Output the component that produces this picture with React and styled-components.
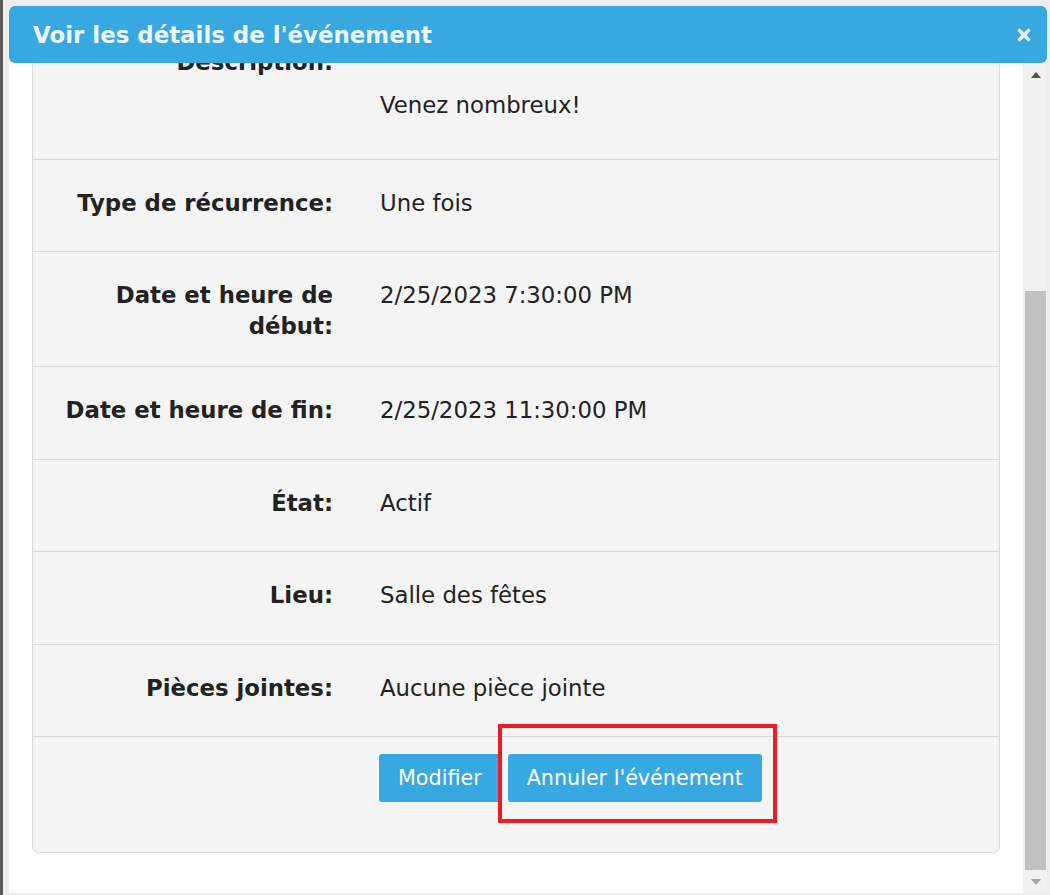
import React from "react";
import styled, { createGlobalStyle } from "styled-components";

const GlobalStyle = createGlobalStyle`
  html,
  body {
    margin: 0;
    height: 100%;
    overflow: hidden;
    background-color: #5a5a5a;
    font-family: "DejaVu Sans", Verdana, sans-serif;
  }
`;

const Backdrop = styled.div`
  height: 895px;
  padding-left: 3px;
  box-sizing: border-box;
`;

const Dialog = styled.div`
  display: flex;
  flex-direction: column;
  height: 100%;
  padding: 6px 3px 2px 6px;
  box-sizing: border-box;
  background-color: #eeeeee;
`;

const TitleBar = styled.div`
  flex-shrink: 0;
  display: flex;
  justify-content: space-between;
  align-items: center;
  height: 57px;
  padding: 1px 15px 0 24px;
  box-sizing: border-box;
  border-radius: 6px;
  background-color: #38a9e0;
`;

const Title = styled.h1`
  margin: 0;
  font-size: 22.9px;
  font-weight: bold;
  color: #eef7fc;
`;

const CloseButton = styled.button`
  display: flex;
  padding: 0;
  border: none;
  background: none;
  cursor: pointer;
`;

const Content = styled.div`
  flex: 1;
  min-height: 0;
  display: flex;
  background-color: #ffffff;
`;

const Viewport = styled.div`
  flex: 1;
  display: flex;
  flex-direction: column;
  justify-content: flex-end;
  overflow: hidden;
  padding: 0 23px 40px;
`;

const Panel = styled.div`
  flex-shrink: 0;
  border: 1px solid #dcdcdc;
  border-radius: 6px;
  background-color: #f4f4f4;
  color: #222222;
  font-size: 22.8px;
  line-height: 31px;
`;

const Row = styled.div`
  display: grid;
  grid-template-columns: 300px 1fr;
  column-gap: 47px;
  padding: 28px 0 24px;
  border-top: ${(p) => (p.$first ? "none" : "1px solid #d6d6d6")};
`;

const Label = styled.div`
  text-align: right;
  font-weight: bold;
`;

const Value = styled.div`
  padding-bottom: 8.5px;
`;

const Paragraph = styled.p`
  margin: 43px 0 5px;
`;

const Footer = styled(Row)`
  column-gap: 46px;
  padding: 17px 0 50px;
`;

const Actions = styled.div`
  grid-column: 2;
  display: flex;
  gap: 7px;
`;

const Button = styled.button`
  height: 48px;
  padding: 0 19px;
  border: none;
  border-radius: 3px;
  background-color: #38a9e0;
  color: #ffffff;
  font-family: "DejaVu Sans", Verdana, sans-serif;
  font-size: 20.7px;
  cursor: pointer;
`;

const Highlight = styled.div`
  position: relative;
  display: flex;
`;

const HighlightBox = styled.div`
  position: absolute;
  top: -30px;
  left: -10px;
  right: -15px;
  bottom: -21px;
  border: 4px solid #ec1c26;
  pointer-events: none;
`;

const Scrollbar = styled.div`
  flex-shrink: 0;
  display: flex;
  flex-direction: column;
  width: 24px;
  background-color: #f1f1f1;
`;

const ArrowButton = styled.div`
  flex-shrink: 0;
  display: flex;
  justify-content: center;
  align-items: center;
  height: 23px;
  padding-left: 1px;

  &::before {
    content: "";
    border-left: 5.5px solid transparent;
    border-right: 5.5px solid transparent;
    ${(p) =>
      p.$down
        ? `border-top: 6px solid ${p.$disabled ? "#a3a3a3" : "#505050"};`
        : `border-bottom: 6px solid ${p.$disabled ? "#a3a3a3" : "#505050"};`}
  }
`;

const Track = styled.div`
  flex: 1;
  display: flex;
  flex-direction: column;
  justify-content: flex-end;
`;

const Thumb = styled.div`
  height: 579px;
  margin: 0 1px 0 2px;
  background-color: #c1c1c1;
`;

const details = [
  { label: "Type de récurrence:", value: "Une fois" },
  { label: "Date et heure de début:", value: "2/25/2023 7:30:00 PM" },
  { label: "Date et heure de fin:", value: "2/25/2023 11:30:00 PM" },
  { label: "État:", value: "Actif" },
  { label: "Lieu:", value: "Salle des fêtes" },
  { label: "Pièces jointes:", value: "Aucune pièce jointe" },
];

const CloseIcon = () => (
  <svg width="16" height="16" viewBox="0 0 16 16">
    <path
      d="M3.5 3.5 L12.5 12.5 M12.5 3.5 L3.5 12.5"
      stroke="#e3f2fa"
      strokeWidth="3.6"
      strokeLinecap="round"
    />
  </svg>
);

const App = () => {
  return (
    <>
      <GlobalStyle />
      <Backdrop>
        <Dialog>
          <TitleBar>
            <Title>Voir les détails de l'événement</Title>
            <CloseButton aria-label="Fermer">
              <CloseIcon />
            </CloseButton>
          </TitleBar>

          <Content>
            <Viewport>
              <Panel>
                <Row $first>
                  <Label>Description:</Label>
                  <Value>
                    <Paragraph>Venez nombreux!</Paragraph>
                  </Value>
                </Row>

                {details.map((item) => (
                  <Row key={item.label}>
                    <Label>{item.label}</Label>
                    <Value>{item.value}</Value>
                  </Row>
                ))}

                <Footer>
                  <Actions>
                    <Button>Modifier</Button>
                    <Highlight>
                      <Button>Annuler l'événement</Button>
                      <HighlightBox />
                    </Highlight>
                  </Actions>
                </Footer>
              </Panel>
            </Viewport>

            <Scrollbar>
              <ArrowButton />
              <Track>
                <Thumb />
              </Track>
              <ArrowButton $down $disabled />
            </Scrollbar>
          </Content>
        </Dialog>
      </Backdrop>
    </>
  );
};

export default App;
